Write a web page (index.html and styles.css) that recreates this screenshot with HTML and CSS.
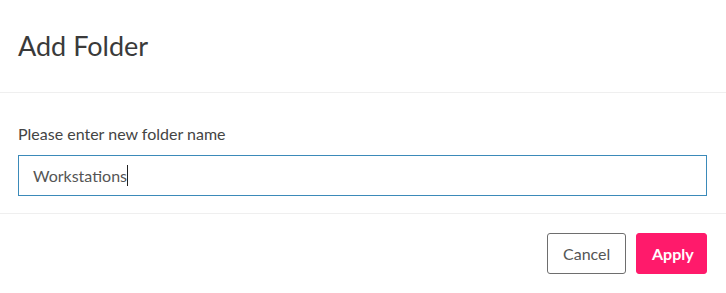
FILE: index.html
```
<!DOCTYPE html>
<html>
<head>
<meta charset="utf-8">
<link rel="stylesheet" href="styles.css">
</head>
<body>
<div class="modal">
  <div class="modal-header">
    <h1 class="title">Add Folder</h1>
  </div>
  <div class="modal-body">
    <label class="label" for="name">Please enter new folder name</label>
    <div class="input"><span class="value">Workstations</span><span class="caret"></span></div>
  </div>
  <div class="modal-footer">
    <button class="btn btn-cancel">Cancel</button>
    <button class="btn btn-apply">Apply</button>
  </div>
</div>
</body>
</html>
```
FILE: styles.css
```
html, body {
  margin: 0;
  padding: 0;
  background: #fff;
}
body {
  font-family: Lato, "Liberation Sans", sans-serif;
  color: #333;
}
.modal {
  width: 726px;
  height: 293px;
  display: flex;
  flex-direction: column;
}
.modal-header {
  height: 93px;
  box-sizing: border-box;
  border-bottom: 1px solid #efefef;
  padding: 0 19px 0 18px;
}
.title {
  margin: 0;
  padding-top: 28px;
  font-size: 27px;
  font-weight: 400;
  line-height: 36px;
  color: #3a3a3a;
}
.modal-body {
  height: 121px;
  box-sizing: border-box;
  border-bottom: 1px solid #efefef;
  padding: 31px 19px 0 18px;
}
.label {
  display: block;
  font-size: 16px;
  line-height: 20px;
  color: #444;
  margin-bottom: 11px;
}
.input {
  height: 41px;
  box-sizing: border-box;
  border: 1px solid #3b8ab9;
  display: flex;
  align-items: center;
  padding-left: 14px;
  font-size: 16px;
  color: #555;
}
.caret {
  display: inline-block;
  width: 1px;
  height: 21px;
  background: #222;
  margin-left: 0;
}
.modal-footer {
  display: flex;
  justify-content: flex-end;
  gap: 10px;
  padding: 19px 19px 0 18px;
}
.btn {
  height: 41px;
  box-sizing: border-box;
  border-radius: 3px;
  font-family: Lato, "Liberation Sans", sans-serif;
  font-size: 16px;
  padding: 0 15px;
  cursor: pointer;
}
.btn-cancel {
  background: #fff;
  border: 1px solid #6e6e6e;
  color: #555;
  width: 79px;
}
.btn-apply {
  background: #ff1a6b;
  border: 1px solid #ff1a6b;
  color: #fff;
  font-weight: 700;
  width: 71px;
}
```
